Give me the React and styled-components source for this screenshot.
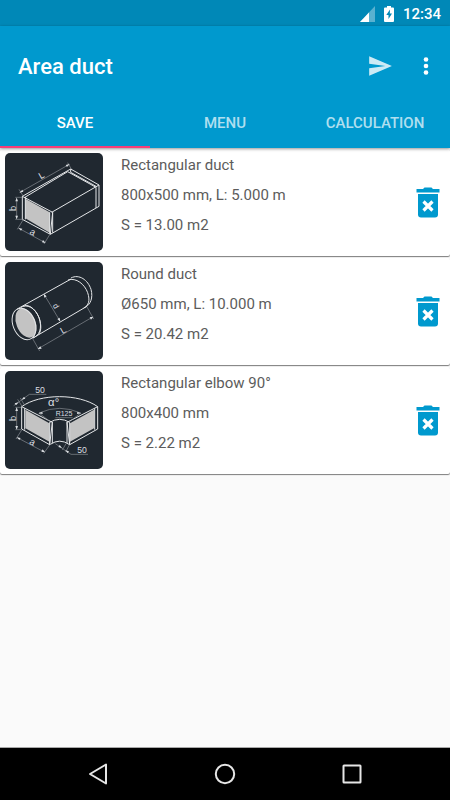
import React, { useState } from 'react';
import styled, { createGlobalStyle } from 'styled-components';

const GlobalStyle = createGlobalStyle`
  * {
    box-sizing: border-box;
  }

  body {
    margin: 0;
    background-color: #fafafa;
    font-family: Roboto, "Liberation Sans", sans-serif;
  }

  button {
    margin: 0;
    padding: 0;
    border: none;
    background: none;
    font-family: inherit;
    cursor: pointer;
  }

  svg {
    display: block;
  }
`;

const PageContainer = styled.div`
  display: flex;
  flex-direction: column;
  min-height: 100vh;
`;

const StatusBar = styled.div`
  display: flex;
  align-items: center;
  justify-content: flex-end;
  gap: 9px;
  height: 26px;
  padding: 1px 9px 0 0;
  background-color: #0088b7;
  color: white;
`;

const Clock = styled.time`
  font-size: 15px;
  font-weight: 500;
  line-height: 24px;
`;

const Header = styled.header`
  position: relative;
  background-color: #0099ce;
  box-shadow: 0 1px 3px rgba(0, 0, 0, 0.4);
`;

const Toolbar = styled.div`
  display: flex;
  align-items: center;
  height: 72px;
  padding: 8px 2px 0 18px;
`;

const Title = styled.h1`
  flex: 1;
  margin: 0;
  padding-top: 2px;
  color: white;
  font-size: 22px;
  font-weight: 500;
  line-height: 28px;
`;

const ToolbarButton = styled.button`
  display: flex;
  align-items: center;
  justify-content: center;
  width: ${(props) => props.$width};
  height: 48px;
  color: white;
  opacity: ${(props) => (props.$dimmed ? 0.8 : 1)};
`;

const Tabs = styled.div`
  display: grid;
  grid-template-columns: repeat(3, 1fr);
`;

const Tab = styled.button`
  height: 50px;
  padding-top: 2px;
  border-bottom: 2px solid ${(props) => (props.$active ? '#f83d78' : 'transparent')};
  color: ${(props) => (props.$active ? 'white' : 'rgba(255, 255, 255, 0.7)')};
  font-size: 15px;
  font-weight: 500;
`;

const DuctList = styled.ul`
  display: flex;
  flex: 1;
  flex-direction: column;
  gap: 2px;
  margin: 0;
  padding: 1px 0 0;
  list-style: none;
`;

const DuctCard = styled.li`
  display: flex;
  align-items: center;
  padding: 0 10px 0 5px;
  border-radius: 2px;
  background-color: white;
  box-shadow: 0 1px 1px rgba(0, 0, 0, 0.5);
`;

const Thumbnail = styled.svg`
  width: 98px;
  height: 98px;
  margin: 4px 0 5px;
  border-radius: 5px;
  background-color: #202830;
  fill: none;
  stroke: #e4e6e8;
  stroke-width: 3;

  text {
    fill: #dcdfe2;
    stroke: none;
    font-family: "Liberation Sans", sans-serif;
    text-anchor: middle;
  }

  .dim {
    stroke: #8b9096;
    stroke-width: 2;
  }

  .face {
    fill: #c3c3c3;
    stroke: none;
  }

  .arrow {
    fill: #dcdfe2;
    stroke: none;
  }
`;

const DuctInfo = styled.div`
  flex: 1;
  align-self: flex-start;
  padding: 1px 0 0 18px;
`;

const InfoLine = styled.p`
  margin: 0;
  color: #5c5c5c;
  font-size: 15px;
  line-height: 30px;
`;

const DeleteButton = styled.button`
  color: #0099ce;
`;

const NavBar = styled.nav`
  display: grid;
  grid-template-columns: repeat(3, 1fr);
  height: 53px;
  padding: 0 35px;
  border-top: 1px solid #a8a8a8;
  background-color: black;
`;

const NavButton = styled.button`
  display: flex;
  align-items: center;
  justify-content: center;
`;

function SignalIcon() {
  return (
    <svg width="15" height="16" viewBox="0 0 15 16" fill="white">
      <path d="M0 16L15 0v16z" opacity="0.35" />
      <path d="M0 16L9 6.4V16z" />
    </svg>
  );
}

function BatteryIcon() {
  return (
    <svg width="10" height="16" viewBox="0 0 10 16">
      <path d="M3 0h4v1.5h2q1 0 1 1V15q0 1-1 1H1q-1 0-1-1V2.500q0-1 1-1h2z" fill="white" />
      <path d="M6 3.500L2.300 9h2.200v4L8 7.500H5.800z" fill="#0088b7" />
    </svg>
  );
}

function SendIcon() {
  return (
    <svg width="26" height="26" viewBox="0 0 24 24" fill="currentColor">
      <path d="M2.010 21L23 12 2.010 3 2 10l15 2-15 2z" />
    </svg>
  );
}

function MoreIcon() {
  return (
    <svg width="6" height="20" viewBox="0 0 6 20" fill="currentColor">
      <circle cx="3" cy="3.500" r="2.300" />
      <circle cx="3" cy="10" r="2.300" />
      <circle cx="3" cy="16.500" r="2.300" />
    </svg>
  );
}

function TrashIcon() {
  return (
    <svg width="24" height="31" viewBox="0 0 24 31" fill="currentColor">
      <path d="M0.500 2h6.500L8.500 0.500h7L17 2h6.500v3.600h-23z" />
      <path d="M2 7h20v20.500q0 3-3 3H5q-3 0-3-3z" />
      <path d="M7.500 14.500l9 9M16.500 14.500l-9 9" stroke="white" strokeWidth="3.200" />
    </svg>
  );
}

function RectDuctDrawing() {
  return (
    <Thumbnail viewBox="15 21 294 294" role="img" aria-label="Rectangular duct">
      <path className="face" d="M76 158L149 199V260L76 217z" />
      <path d="M67 151L158 199L151 265L67 220z" />
      <path d="M76 152V220M149 199V263M158 199V260" />
      <path d="M67 151L212 69L297 117L155 199" />
      <path d="M76 153L203 77L288 124V186M297 117V181L151 265" />
      <path d="M212 69V79L290 122" />
      <path className="dim" d="M60 139L208 55M57 130L70 151M203 50L214 69" />
      <path className="dim" d="M50 157V218M46 154H66M46 220H68" />
      <path className="dim" d="M57 247L135 290M69 222L52 250M149 266L132 294" />
      <path className="arrow" d="M58 140l9-9 3 6zM209 54l-12 3 4 6zM50 155l-4 11h8zM50 220l-4-11h8zM55 246l8 8 4-6zM137 291l-11-2 3-7z" />
      <text x="125" y="97" fontSize="27" transform="rotate(-30 125 90)">L</text>
      <text x="38" y="197" fontSize="28" transform="rotate(-90 38 187)">b</text>
      <text x="97" y="267" fontSize="28" transform="rotate(28 97 260)">a</text>
    </Thumbnail>
  );
}

function RoundDuctDrawing() {
  return (
    <Thumbnail viewBox="15 24 294 294" role="img" aria-label="Round duct">
      <ellipse className="face" cx="78" cy="207" rx="29" ry="46" transform="rotate(-22 78 207)" />
      <ellipse cx="72" cy="210" rx="33" ry="49" transform="rotate(-22 72 210)" />
      <path d="M62 161C80 148 106 161 117 191C128 222 118 246 98 252" />
      <path d="M73 155C91 151 109 170 118 193C125 215 123 233 116 242" />
      <path d="M50 166L213 75M99 252L259 158" />
      <path d="M204 78C229 70 254 91 263 116C271 140 266 154 251 162" />
      <path d="M213 72C237 59 264 78 273 106C280 132 271 151 257 159" />
      <path className="dim" d="M132 121L180 201M115 284L278 189M98 254L119 291M261 159L281 195" />
      <path className="arrow" d="M131 119l2 12 7-4zM181 203l-9-8 7-4zM113 285l8-8 4 7zM280 188l-11 2 4 7z" />
      <text x="168" y="164" fontSize="24" transform="rotate(60 168 156)">d</text>
      <text x="190" y="238" fontSize="28" transform="rotate(-30 190 229)">L</text>
    </Thumbnail>
  );
}

function RectElbowDrawing() {
  return (
    <Thumbnail viewBox="15 27 294 294" role="img" aria-label="Rectangular elbow">
      <path className="face" d="M76 143L148 184V239L76 199zM210 184L282 143V199L210 239z" />
      <path d="M65 134L157 181L149 248L65 201z" />
      <path d="M74 139V203M149 181V248M157 180V243" />
      <path d="M293 134L201 181L209 248L293 201z" />
      <path d="M284 139V203M209 181V248M201 180V243" />
      <path d="M65 134C120 94 237 94 293 134" />
      <path d="M149 181Q179 163 209 181M151 247Q179 228 207 247" />
      <path className="dim" d="M117 153Q179 125 242 153M117 153L149 178M242 153L210 178" />
      <path className="dim" d="M41 131L88 97H139M53 112L66 133M61 108L74 130" />
      <path className="dim" d="M50 138V201M46 136H64M46 203H64" />
      <path className="dim" d="M52 227L133 270M65 204L48 231M149 249L131 274" />
      <path className="dim" d="M166 245L213 277H264M198 245L187 264M208 249L197 270M166 167H218" />
      <path className="arrow" d="M115 154l12-5 1 7zM244 154l-12-5-1 7zM50 136l-4 11h8zM50 203l-4-11h8zM50 226l8 8 4-6zM135 271l-11-2 4-7zM65 113l11-3-4-6zM56 121l-12 3 4 6zM186 258l-11-3 4-6zM196 265l11 3-4 6z" />
      <text x="120" y="92" fontSize="26">50</text>
      <text x="161" y="132" fontSize="34">α°</text>
      <text x="192" y="161" fontSize="21">R125</text>
      <text x="38" y="179" fontSize="28" transform="rotate(-90 38 169)">b</text>
      <text x="97" y="249" fontSize="28" transform="rotate(28 97 241)">a</text>
      <text x="246" y="273" fontSize="26">50</text>
    </Thumbnail>
  );
}

const ducts = [
  { name: 'Rectangular duct', size: '800x500 mm, L: 5.000 m', area: 'S = 13.00 m2', Drawing: RectDuctDrawing },
  { name: 'Round duct', size: 'Ø650 mm, L: 10.000 m', area: 'S = 20.42 m2', Drawing: RoundDuctDrawing },
  { name: 'Rectangular elbow 90°', size: '800x400 mm', area: 'S = 2.22 m2', Drawing: RectElbowDrawing },
];

const tabs = ['SAVE', 'MENU', 'CALCULATION'];

export default function App() {
  const [activeTab, setActiveTab] = useState('SAVE');
  const [saved, setSaved] = useState(ducts);

  const handleDelete = (name) => {
    setSaved(saved.filter((duct) => duct.name !== name));
  };

  return (
    <PageContainer>
      <GlobalStyle />
      <StatusBar>
        <SignalIcon />
        <BatteryIcon />
        <Clock>12:34</Clock>
      </StatusBar>
      <Header>
        <Toolbar>
          <Title>Area duct</Title>
          <ToolbarButton $width="48px" $dimmed aria-label="Send">
            <SendIcon />
          </ToolbarButton>
          <ToolbarButton $width="44px" aria-label="More options">
            <MoreIcon />
          </ToolbarButton>
        </Toolbar>
        <Tabs role="tablist">
          {tabs.map((tab) => (
            <Tab
              key={tab}
              role="tab"
              aria-selected={tab === activeTab}
              $active={tab === activeTab}
              onClick={() => setActiveTab(tab)}
            >
              {tab}
            </Tab>
          ))}
        </Tabs>
      </Header>
      <DuctList>
        {saved.map(({ name, size, area, Drawing }) => (
          <DuctCard key={name}>
            <Drawing />
            <DuctInfo>
              <InfoLine>{name}</InfoLine>
              <InfoLine>{size}</InfoLine>
              <InfoLine>{area}</InfoLine>
            </DuctInfo>
            <DeleteButton aria-label={`Delete ${name}`} onClick={() => handleDelete(name)}>
              <TrashIcon />
            </DeleteButton>
          </DuctCard>
        ))}
      </DuctList>
      <NavBar>
        <NavButton aria-label="Back">
          <svg width="20" height="22" viewBox="0 0 20 22" fill="none" stroke="#e6e6e6" strokeWidth="2" strokeLinejoin="round">
            <path d="M18 1.500V20.500L2 11z" />
          </svg>
        </NavButton>
        <NavButton aria-label="Home">
          <svg width="22" height="22" viewBox="0 0 22 22" fill="none" stroke="#e6e6e6" strokeWidth="2">
            <circle cx="11" cy="11" r="9.200" />
          </svg>
        </NavButton>
        <NavButton aria-label="Recent apps">
          <svg width="20" height="20" viewBox="0 0 20 20" fill="none" stroke="#e6e6e6" strokeWidth="2">
            <rect x="1.500" y="1.500" width="17" height="17" rx="0.500" />
          </svg>
        </NavButton>
      </NavBar>
    </PageContainer>
  );
}
